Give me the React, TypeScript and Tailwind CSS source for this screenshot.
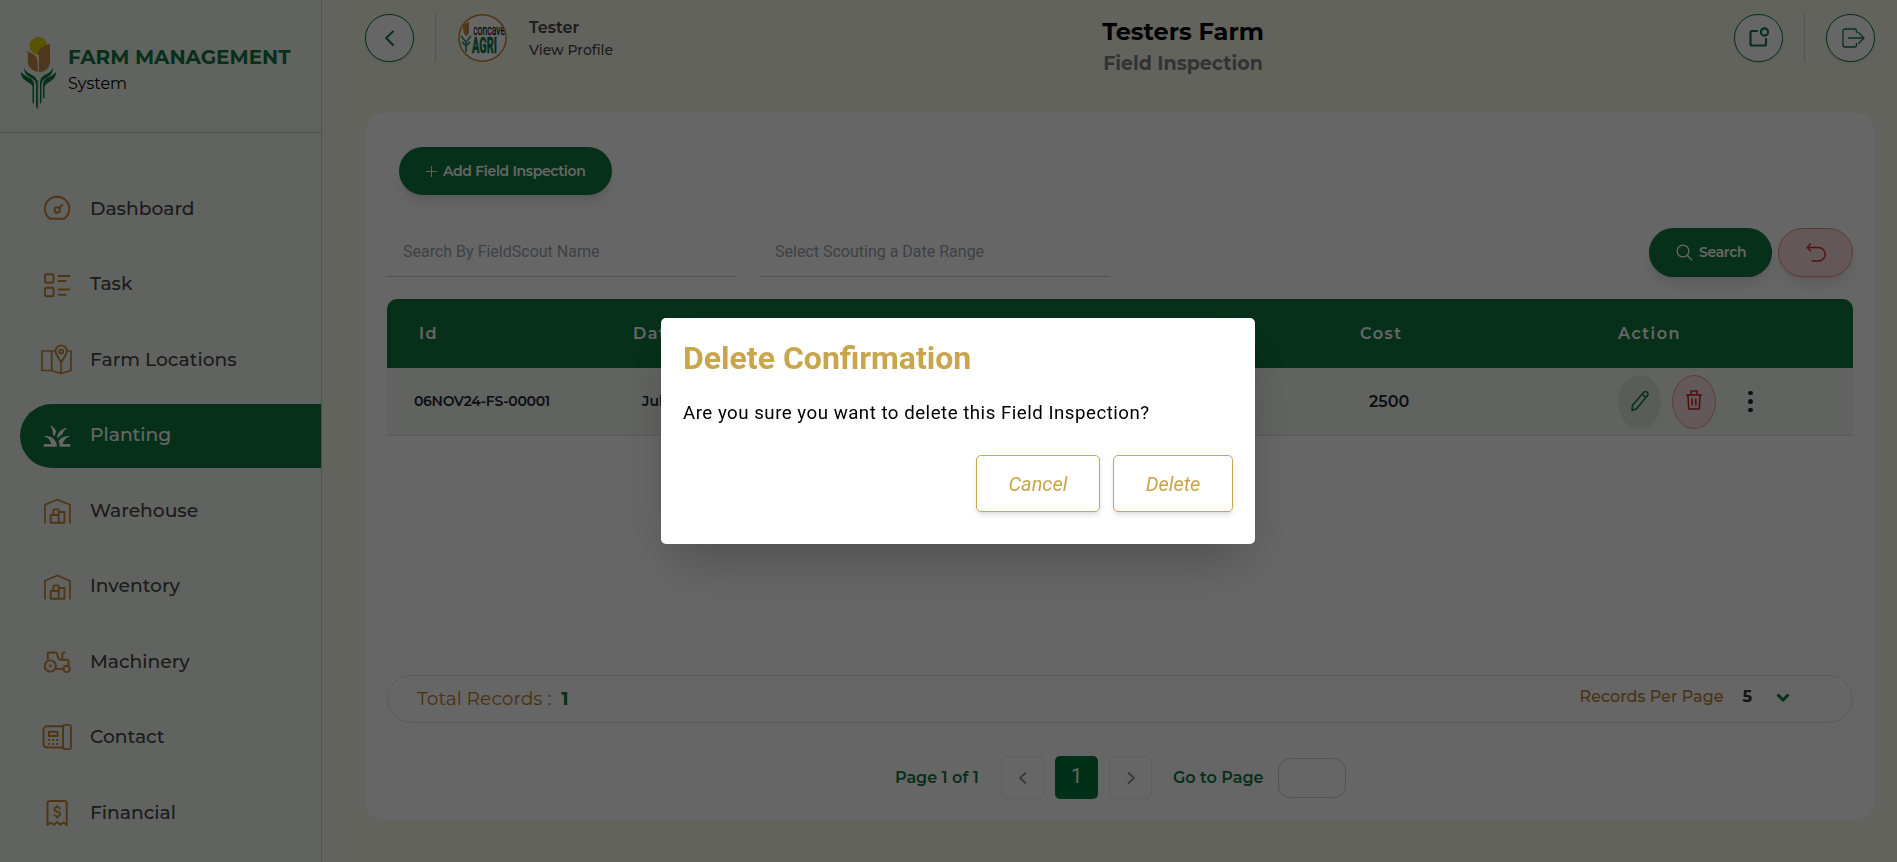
import React from 'react';
import { MdGrass } from 'react-icons/md';

const Icon = ({ children }: { children: React.ReactNode }) => (
  <svg viewBox="0 0 32 32" className="h-8 w-8 shrink-0" fill="none" stroke="#c58634" strokeWidth="1.9" strokeLinejoin="round" strokeLinecap="round">
    {children}
  </svg>
);

const DashboardIcon = () => (
  <Icon>
    <path d="M9 25.8h14.200a12.200 12.200 0 1 0-14.200 0z" />
    <circle cx="16.200" cy="17" r="2.700" />
    <path d="M18.200 15l2.900-3" />
  </Icon>
);
const TaskIcon = () => (
  <Icon>
    <rect x="4" y="5.300" width="8.500" height="8.500" rx="1.300" />
    <rect x="4" y="18.800" width="8.500" height="8.500" rx="1.300" />
    <path d="M17.500 7h11M17.500 12h7M17.500 20.500h11M17.500 25.700h7" />
  </Icon>
);
const MapIcon = () => (
  <Icon>
    <path d="M14.200 7H1v19.500h9.500l9.700 3 9.800-3V7h-3.800M10.700 7v19.500M20.200 19v10" strokeWidth="1.700" />
    <path d="M20.200 18.500c-1.500-4-5.700-7.300-5.700-11.400a5.700 5.700 0 0 1 11.400 0c0 4.100-4.200 7.400-5.700 11.400z" />
    <circle cx="20.200" cy="7.600" r="2" />
  </Icon>
);
const WarehouseIcon = () => (
  <Icon>
    <path d="M4 27.700V9.700L16.300 4.500 28.900 9.700v18" strokeWidth="1.700" />
    <path d="M9.700 20h8v7.700h-8zM12.400 20v-4.800q0-.8.800-.8h3.700q.8 0 .8.800V17M17.700 27.700V17h5.700v10.700z" />
  </Icon>
);
const TractorIcon = () => (
  <Icon>
    <circle cx="9.300" cy="20" r="5.600" />
    <circle cx="9.300" cy="20" r="0.500" />
    <circle cx="25.600" cy="22.900" r="3.200" />
    <path d="M15 22.900h7.300M6.800 14V6.500h8.400c1.600 1.300 1.400 7.300 4.200 7.300h7c1 0 1.300.6 1.200 1.500v4M21.300 13.500V8.500c0-1.500.8-2 2.500-2" />
  </Icon>
);
const PhoneIcon = () => (
  <Icon>
    <path d="M22 4.300H6.500q-4 0-4 4v13.200q0 4 4 4H22" />
    <rect x="22" y="2.900" width="7.900" height="24.200" rx="2.200" />
    <rect x="8" y="9.700" width="8.600" height="4.300" />
    <path d="M8.200 18h.1M12.200 18h.1M16.200 18h.1M8.200 22h.1M12.200 22h.1M16.200 22h.1" strokeLinecap="square" />
  </Icon>
);
const ReceiptIcon = () => (
  <Icon>
    <path d="M6.500 28V6q0-2 2-2h15.200q2 0 2 2v22l-3.200-2.600-3.100 2.300-3.300-2.600-3.200 2.600-3.200-2.300z" />
    <path d="M19 11.700c-.4-1-1.400-1.500-2.900-1.500-1.700 0-2.800.8-2.800 2.200 0 3.200 5.900 1.300 5.900 4.700 0 1.500-1.300 2.200-3 2.200-1.500 0-2.600-.6-3-1.600M16.200 8.500v1.700M16.200 19.300V21" strokeWidth="1.700" />
  </Icon>
);
const PlantIcon = () => <MdGrass className="h-8 w-8 shrink-0 text-white" />;

const items = [
  { label: 'Dashboard', icon: DashboardIcon },
  { label: 'Task', icon: TaskIcon },
  { label: 'Farm Locations', icon: MapIcon },
  { label: 'Planting', icon: PlantIcon, active: true },
  { label: 'Warehouse', icon: WarehouseIcon },
  { label: 'Inventory', icon: WarehouseIcon },
  { label: 'Machinery', icon: TractorIcon },
  { label: 'Contact', icon: PhoneIcon },
  { label: 'Financial', icon: ReceiptIcon },
];

const Logo = () => (
  <svg viewBox="0 0 36 74" className="h-[74px] w-9 shrink-0">
    <circle cx="17.300" cy="9.700" r="8.900" fill="#e0d000" />
    <path d="M6.800 14.500L16 20.500 17.500 36C10 34 6.800 31 6.800 25z" fill="#c58b45" />
    <path d="M29 8c-8 1.500-12 6-12.300 12v16h1.800C25.500 35.500 29 31 29 25z" fill="#c58b45" />
    <path d="M7.500 15.500Q16 18.500 16.600 24" stroke="#f2f7f0" strokeWidth="1" fill="none" />
    <path d="M17.300 19v17" stroke="#f2f7f0" strokeWidth="1.200" />
    <g fill="#0f7841">
      <path d="M3 31c1 5 5.500 6.500 9 8.500 2.500 1.500 4 3.500 4 7v26l-1-2V49c0-3-1-5-4-6.500C7 40.500 3 38 3 31z" />
      <path d="M0 36c4 4.500 9 5 11.700 8.500 1 1.300 1.300 2.500 1.300 4.500v19l-1.500-1.500V51c-.5-3-2.500-3.500-5-5C2.500 43.500 0 41 0 36z" />
      <path d="M32 31c-1 5-5.500 6.500-9 8.500-2.500 1.500-4 3.500-4 7V68l1.500-2V49c0-3 1-5 4-6.500C28.500 40.500 32 38 32 31z" />
      <path d="M35 36c-4 4.500-9 5-11.700 8.500-1 1.300-1.300 2.500-1.300 4.500v14l1.500-1.500V51c.5-3 2.500-3.500 5-5C32.500 43.500 35 41 35 36z" />
      <path d="M16.300 44h.9v29h-.9z" />
    </g>
  </svg>
);

const Avatar = () => (
  <svg viewBox="0 0 49 48" className="ml-[22px] h-12 w-[49px]">
    <defs>
      <clipPath id="round"><ellipse cx="24.500" cy="24" rx="23" ry="22.500" /></clipPath>
    </defs>
    <ellipse cx="24.500" cy="24" rx="23.600" ry="23.200" fill="#fff" stroke="#c58634" strokeWidth="1.500" />
    <g clipPath="url(#round)">
      <path d="M5 12q3-3 6-4v10q-1 4-3 4-3-2-3-10z" fill="#c58b45" />
      <path d="M3 22l5 6 5-6M8 27v11M4 28l4 4 4-4" stroke="#3f9d6d" strokeWidth="1.800" fill="none" />
      <text x="15" y="20.500" fontFamily="Roboto" fontSize="15" fill="#222" stroke="#222" strokeWidth="0.300" textLength="32" lengthAdjust="spacingAndGlyphs">concave</text>
      <text x="14" y="38.500" fontFamily="Roboto" fontWeight="800" fontSize="22" fill="#0f7841" stroke="#0f7841" strokeWidth="0.400" textLength="25" lengthAdjust="spacingAndGlyphs">AGRI</text>
      <rect x="13" y="7" width="2.500" height="15" fill="#fff" />
    </g>
  </svg>
);

const round = 'flex h-12 w-[49px] items-center justify-center rounded-full border border-[#0f7841] bg-white shadow-sm';

export default function App() {
  return (
    <div className="flex h-[862px] w-full overflow-hidden bg-[#f8f8ea] font-['Montserrat','Open_Sans',sans-serif]">
      <aside className="flex w-[322px] shrink-0 flex-col border-r border-[#b3d1bf] bg-[#f3f7f1]">
        <div className="flex h-[133px] shrink-0 border-b border-[#b3d1bf] pl-[21px] pt-9">
          <Logo />
          <div className="pl-[11px] pt-[9px]">
            <div className="text-[20px] font-bold leading-6 text-[#0f7841]">FARM MANAGEMENT</div>
            <div className="pt-[3px] text-[16px] leading-6 text-black">System</div>
          </div>
        </div>
        <nav className="flex flex-col gap-[11.500px] pl-5 pt-11">
          {items.map(({ label, icon: I, active }) => (
            <div key={label} className={active ? 'flex h-16 shrink-0 items-center rounded-l-full bg-[#0f7841] pl-[21px] text-white' : 'flex h-16 shrink-0 items-center pl-[21px] text-[#454545]'}>
              <I />
              <span className="pl-[17px] text-[18.700px] font-medium">{label}</span>
            </div>
          ))}
        </nav>
      </aside>

      <main className="flex flex-1 flex-col pl-[43px] pr-[22px] pt-[14px]">
        <header className="flex h-[99px] justify-between">
          <div className="flex h-12 w-[500px] items-center">
            <div className={round}>
              <svg viewBox="0 0 24 24" className="h-6 w-6" fill="none" stroke="#0f7841" strokeWidth="2"><path d="M15.500 5l-7.300 7 7.300 7.500" /></svg>
            </div>
            <div className="ml-[21px] h-12 w-px bg-[#cfcfcb]" />
            <Avatar />
            <div className="pl-[22px] text-[#444]">
              <div className="text-[16px] font-semibold leading-[23px]">Tester</div>
              <div className="text-[14px] font-medium leading-[22px]">View Profile</div>
            </div>
          </div>
          <div className="pr-1 pt-[2px] text-center font-bold">
            <div className="text-[24px] leading-8 text-black">Testers Farm</div>
            <div className="text-[19px] leading-8 text-[#808080]">Field Inspection</div>
          </div>
          <div className="flex h-12 w-[370px] items-center justify-end">
            <div className={round}>
              <svg viewBox="0 0 24 24" className="h-6 w-6" fill="none" stroke="#0f7841" strokeWidth="2.200" strokeLinecap="round">
                <path d="M10 5H5.300Q3.500 5 3.500 6.800v10.900q0 1.800 1.800 1.800h11.900q1.800 0 1.800-1.800v-4.700" />
                <circle cx="17.500" cy="6" r="3.600" />
              </svg>
            </div>
            <div className="mx-[21px] h-12 w-px bg-[#cfcfcf]" />
            <div className={round}>
              <svg viewBox="0 0 24 24" className="ml-1 h-6 w-6" fill="none" stroke="#0f7841" strokeWidth="1.300" strokeLinecap="round" strokeLinejoin="round">
                <path d="M15.500 6.500V5q0-2-2-2H4Q2 3 2 5v14q0 2 2 2h9.500q2 0 2-2v-1.500M7.500 12H23M17.500 6.500L23 12l-5.500 5.500" />
              </svg>
            </div>
          </div>
        </header>

        <section className="h-[707px] shrink-0 rounded-[20px] bg-white px-[22px] pt-[34px]">
          <button className="ml-3 flex h-12 w-[213px] items-center rounded-full bg-[#0f7841] pl-[27px] text-white shadow-lg">
            <svg viewBox="0 0 12 12" className="mr-[6px] h-[11px] w-[11px]" stroke="currentColor" strokeWidth="1"><path d="M6 0v12M0 6h12" /></svg>
            <span className="text-[14px] font-semibold tracking-[-0.330px]">Add Field Inspection</span>
          </button>

          <div className="mt-[34px] flex h-12 items-end font-['Roboto'] text-[16px] text-[#9ca3af]">
            <div className="h-12 w-[350px] border-b border-[#b7cfc6] pl-4 pt-[11px]">Search By FieldScout Name</div>
            <div className="ml-[22px] h-12 w-[350px] border-b border-[#b7cfc6] pl-4 pt-[11px]">Select Scouting a Date Range</div>
            <button className="ml-auto flex h-[49px] w-[123px] items-center rounded-full bg-[#0f7841] pl-[27px] font-['Montserrat'] text-white shadow-lg">
              <svg viewBox="0 0 17 17" className="mr-[6px] h-[17px] w-[17px]" fill="none" stroke="currentColor" strokeWidth="1.300"><circle cx="7" cy="7" r="5.900" /><path d="M11.200 11.200l5 5" /></svg>
              <span className="text-[14px] font-semibold tracking-[-0.330px]">Search</span>
            </button>
            <button className="ml-[6px] flex h-[49px] w-[75px] items-center justify-center rounded-full border border-[#ec8d8d] bg-[#fbdada] shadow-lg">
              <svg viewBox="0 0 20 20" className="h-5 w-5" fill="none" stroke="#d32f2f" strokeWidth="1.500" strokeLinecap="round" strokeLinejoin="round"><path d="M4.500 1L1.200 4.500l3.300 3.300M1.200 4.500h11.300a6.400 6.400 0 0 1 0 13.500H6" /></svg>
            </button>
          </div>

          <div className="mt-[22px] flex h-[69px] items-center rounded-t-[10px] bg-[#0f7841] text-[16px] font-semibold tracking-[1.500px] text-white">
            <div className="w-[214px] pl-8">Id</div>
            <div className="w-[726px] pl-8">Date</div>
            <div className="w-[258px] pl-[33px]">Cost</div>
            <div className="pl-[33px]">Action</div>
          </div>
          <div className="flex h-[68px] items-center border-b border-[#e0e0e0] bg-[#f3f7f1] font-semibold text-[#1c2733]">
            <div className="w-[228px] pl-[27px] text-[14px] tracking-[-0.300px]">06NOV24-FS-00001</div>
            <div className="w-[726px] pl-[27px] text-[14px]">July</div>
            <div className="w-[250px] pl-[28px] text-[16px]">2500</div>
            <div className="flex items-center pl-[27px]">
              <div className="flex h-[54px] w-[43px] items-center justify-center rounded-[50%] bg-[#dbe9e0]">
                <svg viewBox="0 0 20 22" className="mb-[2px] h-[22px] w-5" fill="none" stroke="#0f7841" strokeWidth="1.600" strokeLinejoin="round"><path d="M2 20.500l.5-5.200L13.800 2.200c1.800-1.800 5.300.8 3.700 3.200L6.500 18.800zM12.300 4.200l3.500 3.200" /></svg>
              </div>
              <div className="ml-[11px] flex h-[54px] w-11 items-center justify-center rounded-[50%] border border-[#e89aa2] bg-[#f8dde0]">
                <svg viewBox="0 0 16 20" className="mb-[3px] h-5 w-4" fill="none" stroke="#d11f27" strokeWidth="1.500" strokeLinejoin="round"><path d="M0 5h16M5 5V1h6v4M2 5.500l.7 13.500h10.600L14 5.500M6.200 8.500v7M9.800 8.500v7" /></svg>
              </div>
              <div className="ml-8 flex flex-col gap-[4px]">
                <i className="h-[4.500px] w-[4.500px] rounded-full bg-[#1c2733]" />
                <i className="h-[4.500px] w-[4.500px] rounded-full bg-[#1c2733]" />
                <i className="h-[4.500px] w-[4.500px] rounded-full bg-[#1c2733]" />
              </div>
            </div>
          </div>

          <div className="mt-[239px] flex h-12 items-center rounded-full border border-[#e2e2e4] pl-[29px] pr-[62px]">
            <span className="text-[18.700px] text-[#b97a2f]">Total Records :</span>
            <span className="pl-[10px] text-[18.700px] font-bold text-[#0f7841]">1</span>
            <span className="ml-auto pb-[4px] text-[16px] font-medium text-[#b97a2f]">Records Per Page</span>
            <span className="pb-[4px] pl-[19px] text-[16px] font-bold text-[#333]">5</span>
            <svg viewBox="0 0 14 10" className="mb-[2px] ml-6 h-[10px] w-[14px]" fill="none" stroke="#0f7841" strokeWidth="3"><path d="M1.500 1.500L7 7l5.500-5.500" /></svg>
          </div>

          <div className="mt-[33px] flex h-[43px] items-center pl-[508px] text-[16px] font-semibold text-[#0f7841]">
            <span className="w-[106px] whitespace-nowrap">Page 1 of 1</span>
            <div className="flex h-[43px] w-[43px] items-center justify-center rounded-[5px] border border-[#eaeaea]">
              <svg viewBox="0 0 10 14" className="h-[14px] w-[10px]" fill="none" stroke="#8a8a8a" strokeWidth="1.700"><path d="M8 1.500L2 7l6 5.500" /></svg>
            </div>
            <div className="ml-[11px] flex h-[43px] w-[43px] items-center justify-center rounded-[5px] bg-[#007c3c] pb-[3px] font-['Roboto'] text-[20px] font-normal text-white">1</div>
            <div className="ml-[11px] flex h-[43px] w-[43px] items-center justify-center rounded-[5px] border border-[#eaeaea]">
              <svg viewBox="0 0 10 14" className="h-[14px] w-[10px]" fill="none" stroke="#8a8a8a" strokeWidth="1.700"><path d="M2 1.500L8 7l-6 5.500" /></svg>
            </div>
            <span className="ml-[21px] w-[105px] whitespace-nowrap">Go to Page</span>
            <div className="h-10 w-[68px] rounded-[12px] border border-[#cfcfcf]" />
          </div>
        </section>
      </main>

      <div className="fixed inset-0 flex items-center justify-center bg-black/60 pl-[19px]">
        <div className="h-[226px] w-[594px] rounded-[5px] bg-white px-[22px] pt-5 font-['Roboto'] shadow-2xl">
          <h2 className="text-[32px] font-bold leading-10 text-[#c9a54c]">Delete Confirmation</h2>
          <p className="pt-[21px] text-[18.700px] leading-7 tracking-[0.500px] text-black">Are you sure you want to delete this Field Inspection?</p>
          <div className="mt-7 flex justify-end gap-[13px] text-[20px] italic text-[#c9a54c]">
            <button className="h-[57px] w-[124px] rounded-[5px] border border-[#c9a54c] shadow-md">Cancel</button>
            <button className="h-[57px] w-[120px] rounded-[5px] border border-[#c9a54c] shadow-md">Delete</button>
          </div>
        </div>
      </div>
    </div>
  );
}
